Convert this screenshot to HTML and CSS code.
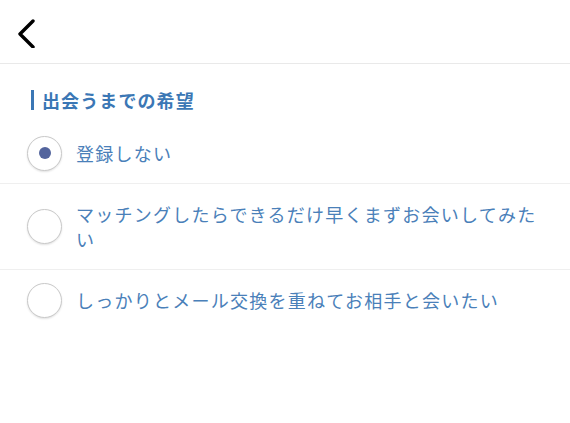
FILE: index.html
```html
<!DOCTYPE html>
<html lang="ja">
<head>
<meta charset="utf-8">
<link rel="stylesheet" href="styles.css">
</head>
<body>
<header class="header">
  <button class="back" aria-label="戻る">
    <svg width="20" height="30" viewBox="0 0 20 30"><path d="M16 3 L3 16 L16 29" fill="none" stroke="#000" stroke-width="3.4" stroke-linecap="round" stroke-linejoin="round"/></svg>
  </button>
</header>
<main>
  <h2 class="title">出会うまでの希望</h2>
  <ul class="options">
    <li class="option">
      <span class="radio checked"><span class="dot"></span></span>
      <span class="label">登録しない</span>
    </li>
    <li class="option">
      <span class="radio"></span>
      <span class="label">マッチングしたらできるだけ早くまずお会いしてみたい</span>
    </li>
    <li class="option">
      <span class="radio"></span>
      <span class="label">しっかりとメール交換を重ねてお相手と会いたい</span>
    </li>
  </ul>
</main>
</body>
</html>
```
FILE: styles.css
```css
html, body {
  margin: 0;
  padding: 0;
  background: #fff;
}
body {
  width: 570px;
  height: 423px;
  overflow: hidden;
  font-family: "Noto Sans CJK JP", "Noto Sans", sans-serif;
}
.header {
  height: 63px;
  border-bottom: 1px solid #e9e9e9;
  display: flex;
  align-items: center;
  padding-left: 17px;
}
.back {
  border: 0;
  background: none;
  padding: 0;
  margin: 2px 0 0 0;
  display: flex;
}
.title {
  margin: 26px 0 13px 31px;
  padding: 1px 0 1px 8px;
  border-left: 3px solid #3b77b5;
  font-size: 18px;
  line-height: 18px;
  height: 18px;
  font-weight: bold;
  letter-spacing: 1.1px;
  color: #3b77b5;
}
.options {
  list-style: none;
  margin: 0;
  padding: 0;
}
.option {
  display: flex;
  align-items: center;
  gap: 14px;
  padding: 0 20px 0 27px;
  border-bottom: 1px solid #efefef;
}
.option:last-child {
  border-bottom: 0;
}
.radio {
  flex: none;
  width: 33px;
  height: 33px;
  border-radius: 50%;
  border: 1px solid #c9c9c9;
  box-shadow: 0 1px 2px rgba(0,0,0,0.12);
  display: flex;
  align-items: center;
  justify-content: center;
  background: #fff;
}
.dot {
  width: 12px;
  height: 12px;
  border-radius: 50%;
  background: #53649d;
}
.label {
  padding: 18px 0 17px;
  font-size: 18px;
  line-height: 25px;
  letter-spacing: 1.25px;
  color: #4a80b9;
}
```
